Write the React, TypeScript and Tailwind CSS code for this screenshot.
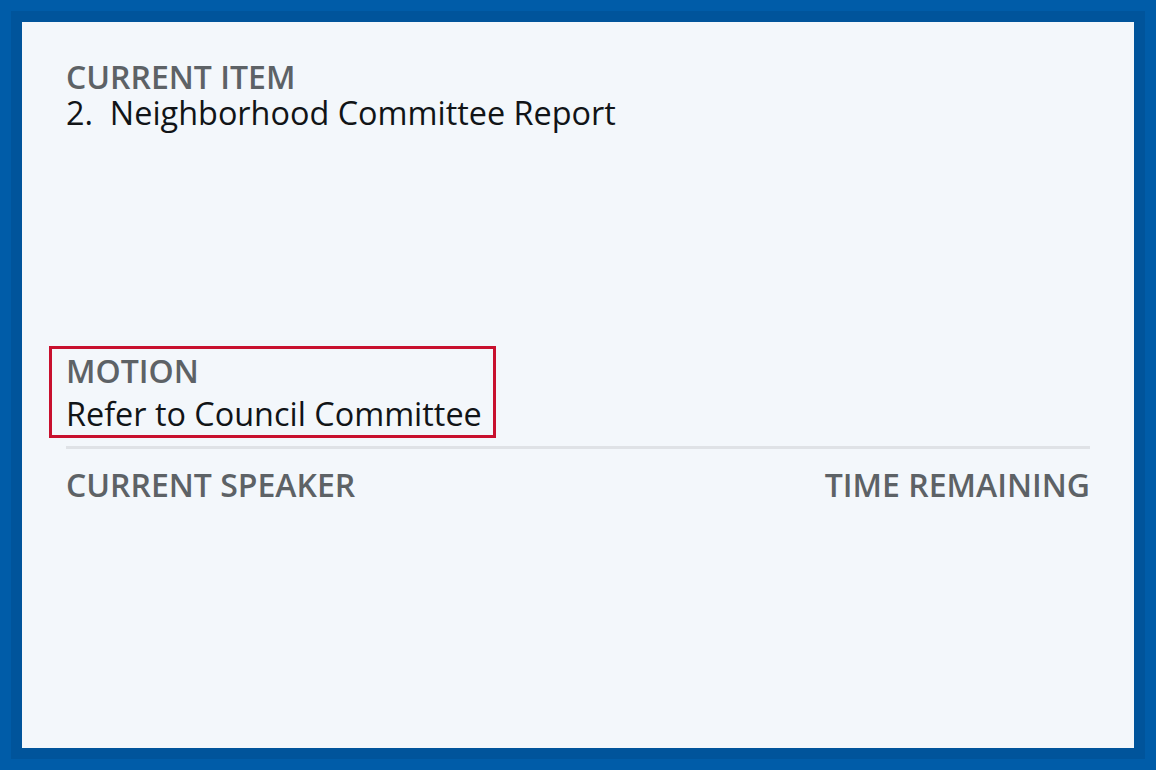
export default function App() {
  return (
    <div className="w-[1156px] h-[770px] bg-[#005ca8] p-[11px]" style={{ fontFamily: '"Open Sans", sans-serif' }}>
      <div className="w-full h-full bg-[#00549b] p-[11px]">
        <div className="w-full h-full bg-[#f3f7fb] px-[44px] pt-[38px] flex flex-col">
          {/* Current item */}
          <div className="h-[286px]">
            <div className="text-[32px] leading-[33px] font-semibold text-[#5d6266]">CURRENT ITEM</div>
            <div className="text-[32.4px] leading-[39px] text-[#111417]">
              2.&nbsp;&nbsp;Neighborhood Committee Report
            </div>
          </div>

          {/* Motion */}
          <div className="self-start -ml-[17px] border-[3px] border-[#c8102e] pl-[14px] pr-[11px]">
            <div className="text-[32px] leading-[43px] font-semibold text-[#5d6266]">MOTION</div>
            <div className="text-[32.4px] leading-[43px] text-[#111417]">Refer to Council Committee</div>
          </div>

          <div className="mt-[8px] h-[3px] bg-[#dfe2e6]" />

          <div className="mt-[17px] flex justify-between text-[32px] leading-[38px] font-semibold text-[#5d6266]">
            <span>CURRENT SPEAKER</span>
            <span>TIME REMAINING</span>
          </div>
        </div>
      </div>
    </div>
  );
}
